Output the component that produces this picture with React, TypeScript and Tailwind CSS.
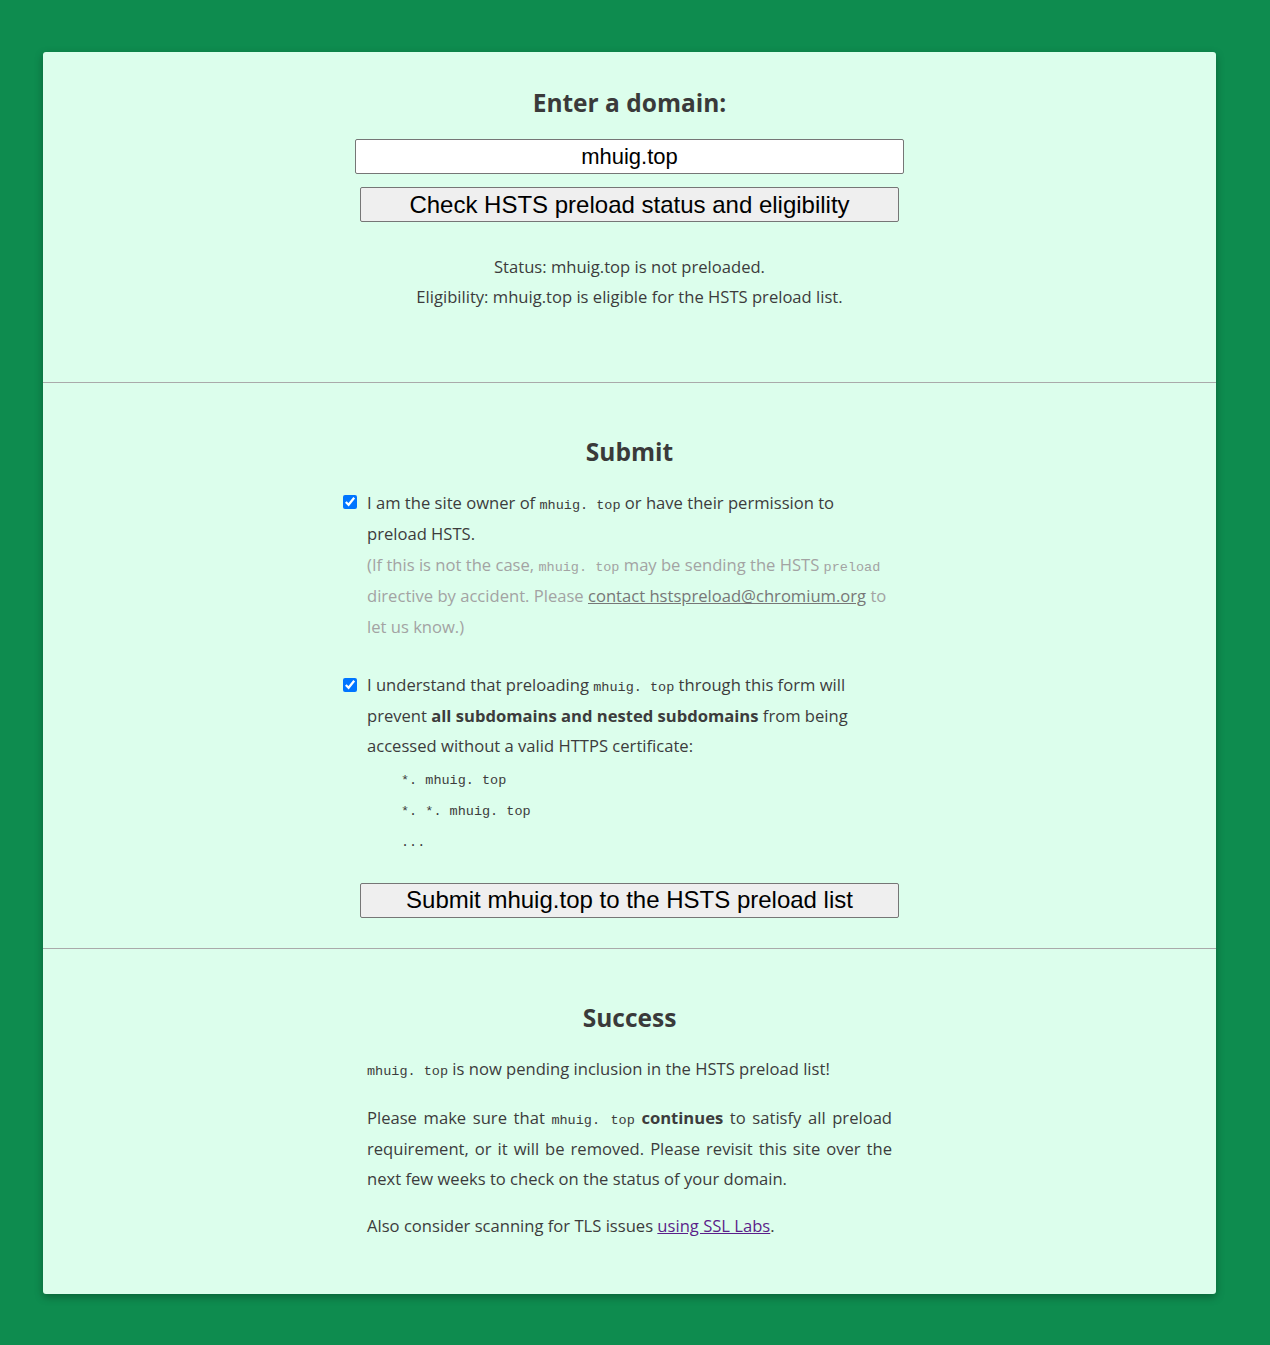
import React from "react";

const body = { fontFamily: "'Open Sans', Lato, sans-serif" };
const mono = "font-['Liberation_Mono',monospace] text-[13.5px] leading-none";

function Code({ children }: { children: React.ReactNode }) {
  return <code className={mono}>{children}</code>;
}

export default function App() {
  const domain = "mhuig.top";

  return (
    <div className="min-h-[1345px] bg-[#0e8c4f] pt-[52px] pb-[51px]" style={body}>
      <div className="ml-[43px] w-[1173px] rounded-[3px] bg-[#dcfeec] text-[16.6px] text-[#3c3c3c] shadow-[0_3px_8px_rgba(0,0,0,0.3)]">
        {/* Check form */}
        <section className="flex flex-col items-center pt-[36px] pb-[70px]">
          <h2 className="text-[24.5px] font-bold leading-[30px] text-[#3a3a3a]">Enter a domain:</h2>
          <input
            readOnly
            value={domain}
            className="mt-[21px] h-[35px] w-[549px] rounded-[2px] border border-[#767676] bg-white text-center font-['Liberation_Sans',Arial,sans-serif] text-[22px] text-black outline-none"
          />
          <button className="mt-[13px] h-[35px] w-[539px] rounded-[2px] border border-[#767676] bg-[#efefef] font-['Liberation_Sans',Arial,sans-serif] text-[24px] leading-[32px] text-black">
            Check HSTS preload status and eligibility
          </button>
          <div className="mt-[30px] text-center leading-[30px]">
            <p>Status: {domain} is not preloaded.</p>
            <p>Eligibility: {domain} is eligible for the HSTS preload list.</p>
          </div>
        </section>

        <hr className="border-0 border-t border-[#aaaaaa]" />

        {/* Submit form */}
        <section className="flex flex-col items-center pt-[54px] pb-[30px]">
          <h2 className="text-[24.5px] font-bold leading-[30px] text-[#3a3a3a]">Submit</h2>
          <div className="mt-[20px] w-[525px]">
            <label className="relative block leading-[31px]">
              <input
                type="checkbox"
                checked
                readOnly
                className="absolute -left-[24px] top-[8px] h-[14px] w-[14px] accent-[#0075ff]"
              />
              I am the site owner of <Code>mhuig. top</Code> or have their permission to preload HSTS.
              <br />
              <span className="text-[#a3a3a3]">
                (If this is not the case, <Code>mhuig. top</Code> may be sending the HSTS <Code>preload</Code> directive by
                accident. Please <a className="text-[#777] underline">contact hstspreload@chromium.org</a> to let us know.)
              </span>
            </label>

            <label className="relative mt-[28px] block leading-[30.5px]">
              <input
                type="checkbox"
                checked
                readOnly
                className="absolute -left-[24px] top-[8px] h-[14px] w-[14px] accent-[#0075ff]"
              />
              I understand that preloading <Code>mhuig. top</Code> through this form will prevent{" "}
              <strong className="font-bold">all subdomains and nested subdomains</strong> from being accessed without a valid
              HTTPS certificate:
              <ul className="pl-[34px] leading-[31px]">
                <li><Code>*. mhuig. top</Code></li>
                <li><Code>*. *. mhuig. top</Code></li>
                <li><Code>...</Code></li>
              </ul>
            </label>
          </div>
          <button className="mt-[28px] h-[35px] w-[539px] rounded-[2px] border border-[#767676] bg-[#efefef] font-['Liberation_Sans',Arial,sans-serif] text-[24px] leading-[32px] text-black">
            Submit {domain} to the HSTS preload list
          </button>
        </section>

        <hr className="border-0 border-t border-[#aaaaaa]" />

        {/* Result */}
        <section className="flex flex-col items-center pt-[54px] pb-[53px]">
          <h2 className="text-[24.5px] font-bold leading-[30px] text-[#3a3a3a]">Success</h2>
          <div className="mt-[21px] w-[525px] leading-[30.5px]">
            <p>
              <Code>mhuig. top</Code> is now pending inclusion in the HSTS preload list!
            </p>
            <p className="mt-[19px] text-justify">
              Please make sure that <Code>mhuig. top</Code> <strong className="font-bold">continues</strong> to satisfy all
              preload requirement, or it will be removed. Please revisit this site over the next few weeks to check on the
              status of your domain.
            </p>
            <p className="mt-[16px]">
              Also consider scanning for TLS issues <a className="text-[#5b1f8a] underline">using SSL Labs</a>.
            </p>
          </div>
        </section>
      </div>
    </div>
  );
}
